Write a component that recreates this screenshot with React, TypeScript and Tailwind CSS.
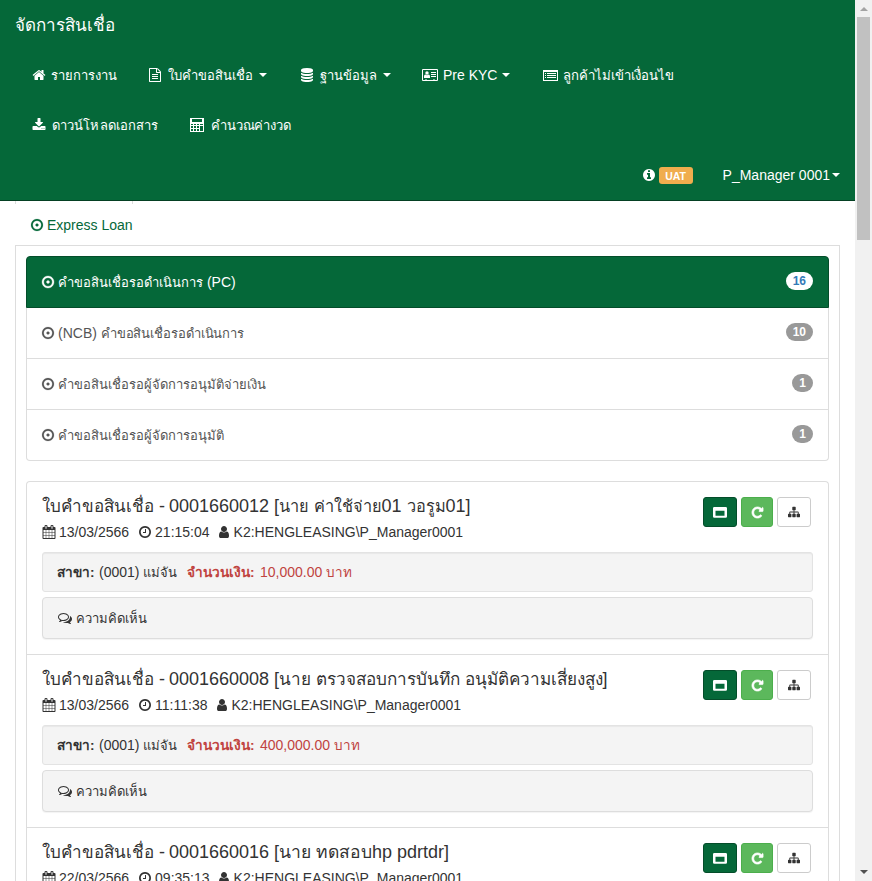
import type { ReactNode } from "react";

const CIRCLE =
  "q0 209-103 385.5t-279.5 279.5-385.5 103-385.5-103-279.5-279.5-103-385.5 103-385.5 279.5-279.5 385.5-103 385.5 103 279.5 279.5 103 385.5z";

const PATHS = {
  home: "M1472 992v480q0 26-19 45t-45 19h-384v-384h-256v384h-384q-26 0-45-19t-19-45v-480q0-1 .5-3t.5-3l575-474 575 474q1 2 1 6zm223-69l-62 74q-8 9-21 11h-3q-13 0-21-7l-692-577-692 577q-12 8-24 7-13-2-21-11l-62-74q-8-10-7-23.5t11-21.5l719-599q32-26 76-26t76 26l244 204v-195q0-14 9-23t23-9h192q14 0 23 9t9 23v408l219 182q10 8 11 21.5t-7 23.5z",
  file: "M1596 380q28 28 48 76t20 88v1152q0 40-28 68t-68 28h-1344q-40 0-68-28t-28-68v-1600q0-40 28-68t68-28h896q40 0 88 20t76 48zm-444-244v376h376q-10-29-22-41l-313-313q-12-12-41-22zm384 1528v-1024h-416q-40 0-68-28t-28-68v-416h-768v1536h1280zm-1024-864q0-14 9-23t23-9h704q14 0 23 9t9 23v64q0 14-9 23t-23 9h-704q-14 0-23-9t-9-23v-64zm736 224q14 0 23 9t9 23v64q0 14-9 23t-23 9h-704q-14 0-23-9t-9-23v-64q0-14 9-23t23-9h704zm0 256q14 0 23 9t9 23v64q0 14-9 23t-23 9h-704q-14 0-23-9t-9-23v-64q0-14 9-23t23-9h704z",
  database: "M896 768q237 0 443-43t325-127v170q0 69-103 128t-280 93.5-385 34.5-385-34.5-280-93.5-103-128v-170q119 84 325 127t443 43zm0 768q237 0 443-43t325-127v170q0 69-103 128t-280 93.5-385 34.5-385-34.5-280-93.5-103-128v-170q119 84 325 127t443 43zm0-384q237 0 443-43t325-127v170q0 69-103 128t-280 93.5-385 34.5-385-34.5-280-93.5-103-128v-170q119 84 325 127t443 43zm0-1152q208 0 385 34.5t280 93.5 103 128v128q0 69-103 128t-280 93.5-385 34.5-385-34.5-280-93.5-103-128v-128q0-69 103-128t280-93.5 385-34.5z",
  download: "M1344 1344q0-26-19-45t-45-19-45 19-19 45 19 45 45 19 45-19 19-45zm256 0q0-26-19-45t-45-19-45 19-19 45 19 45 45 19 45-19 19-45zm128-224v320q0 40-28 68t-68 28h-1472q-40 0-68-28t-28-68v-320q0-40 28-68t68-28h465l135 136q58 56 136 56t136-56l136-136h464q40 0 68 28t28 68zm-325-569q17 41-14 70l-448 448q-18 19-45 19t-45-19l-448-448q-31-29-14-70 17-39 59-39h256v-448q0-26 19-45t45-19h256q26 0 45 19t19 45v448h256q42 0 59 39z",
  dot: "M1088 896q0 80-56 136t-136 56-136-56-56-136 56-136 136-56 136 56 56 136zm-192-544q-148 0-273 73t-198 198-73 273 73 273 198 198 273 73 273-73 198-198 73-273-73-273-198-198-273-73zm768 544" + CIRCLE,
  clock: "M1024 544v448q0 14-9 23t-23 9h-320q-14 0-23-9t-9-23v-64q0-14 9-23t23-9h224v-352q0-14 9-23t23-9h64q14 0 23 9t9 23zm416 352q0-148-73-273t-198-198-273-73-273 73-198 198-73 273 73 273 198 198 273 73 273-73 198-198 73-273zm224 0" + CIRCLE,
  info: "M1152 1376v-160q0-14-9-23t-23-9h-96v-512q0-14-9-23t-23-9h-320q-14 0-23 9t-9 23v160q0 14 9 23t23 9h96v320h-96q-14 0-23 9t-9 23v160q0 14 9 23t23 9h448q14 0 23-9t9-23zm-128-896v-160q0-14-9-23t-23-9h-192q-14 0-23 9t-9 23v160q0 14 9 23t23 9h192q14 0 23-9t9-23zm640 416" + CIRCLE,
  calendar: "M192 1664h288v-288h-288v288zm352 0h320v-288h-320v288zm-352-352h288v-320h-288v320zm352 0h320v-320h-320v320zm-352-384h288v-288h-288v288zm736 736h320v-288h-320v288zm-384-736h320v-288h-320v288zm768 736h288v-288h-288v288zm-384-352h320v-320h-320v320zm-352-864v-288q0-13-9.5-22.5t-22.5-9.5h-64q-13 0-22.5 9.5t-9.5 22.5v288q0 13 9.5 22.5t22.5 9.5h64q13 0 22.5-9.5t9.5-22.5zm736 864h288v-320h-288v320zm-384-384h320v-288h-320v288zm384 0h288v-288h-288v288zm32-480v-288q0-13-9.5-22.5t-22.5-9.5h-64q-13 0-22.5 9.5t-9.5 22.5v288q0 13 9.5 22.5t22.5 9.5h64q13 0 22.5-9.5t9.5-22.5zm384-64v1280q0 52-38 90t-90 38h-1408q-52 0-90-38t-38-90v-1280q0-52 38-90t90-38h128v-96q0-66 47-113t113-47h64q66 0 113 47t47 113v96h384v-96q0-66 47-113t113-47h64q66 0 113 47t47 113v96h128q52 0 90 38t38 90z",
  user: "M1536 1399q0 109-62.5 187t-150.5 78h-854q-88 0-150.5-78t-62.5-187q0-85 8.5-160.5t31.5-152 58.5-131 94-89 134.5-34.5q131 128 313 128t313-128q76 0 134.5 34.5t94 89 58.5 131 31.5 152 8.5 160.5zm-256-887q0 159-112.5 271.5t-271.5 112.5-271.5-112.5-112.5-271.5 112.5-271.5 271.5-112.5 271.5 112.5 112.5 271.5z",
  comments: "M704 384q-153 0-286 52t-211.5 141-78.5 191q0 82 53 158t149 132l97 56-35 84q34-20 62-39l44-31 53 10q78 14 153 14 153 0 286-52t211.5-141 78.5-191-78.5-191-211.5-141-286-52zm0-128q191 0 353.5 68.5t256.5 186.5 94 257-94 257-256.5 186.5-353.5 68.5q-86 0-176-16-124 88-278 128-36 9-86 16h-3q-11 0-20.5-8t-11.5-21q-1-3-1-6.5t.5-6.5 2-6l2.5-5 3.5-5.5 4-5 4.5-5 4-4.5q5-6 23-25t26-29.5 22.5-29 25-38.5 20.5-44q-124-72-195-177t-71-224q0-139 94-257t256.5-186.5 353.5-68.5zm822 1169q10 24 20.5 44t25 38.5 22.5 29 26 29.5 23 25q1 1 4 4.5t4.5 5 4 5 3.5 5.5l2.5 5 2 6 .5 6.5-1 6.5q-3 14-13 22t-22 7q-50-7-86-16-154-40-278-128-90 16-176 16-271 0-472-132 58 4 88 4 161 0 309-45t264-129q125-92 192-212t67-254q0-77-23-152 129 71 204 178t75 230q0 120-71 224.5t-195 176.5z",
  repeat: "M1664 256v448q0 26-19 45t-45 19h-448q-42 0-59-40-17-39 14-69l138-138q-148-137-349-137-104 0-198.5 40.5t-163.5 109.5-109.5 163.5-40.5 198.5 40.5 198.5 109.5 163.5 163.5 109.5 198.5 40.5q119 0 225-52t179-147q7-10 23-12 15 0 25 9l137 138q9 8 9.5 20.5t-7.5 22.5q-109 132-264 204.5t-327 72.5q-156 0-298-61t-245-164-164-245-61-298 61-298 164-245 245-164 298-61q147 0 284.5 55.5t244.5 156.5l130-129q29-31 70-14 39 17 39 59z",
  sitemap: "M1792 1248v320q0 40-28 68t-68 28h-320q-40 0-68-28t-28-68v-320q0-40 28-68t68-28h96v-192h-512v192h96q40 0 68 28t28 68v320q0 40-28 68t-68 28h-320q-40 0-68-28t-28-68v-320q0-40 28-68t68-28h96v-192h-512v192h96q40 0 68 28t28 68v320q0 40-28 68t-68 28h-320q-40 0-68-28t-28-68v-320q0-40 28-68t68-28h96v-192q0-52 38-90t90-38h512v-192h-96q-40 0-68-28t-28-68v-320q0-40 28-68t68-28h320q40 0 68 28t28 68v320q0 40-28 68t-68 28h-96v192h512q52 0 90 38t38 90v192h96q40 0 68 28t28 68z",
};

/* Solid glyph on a 1792-unit grid, 14px square by default. */
function Icon({ name, className = "size-3.5" }: { name: keyof typeof PATHS; className?: string }) {
  return (
    <svg viewBox="0 0 1792 1792" className={`shrink-0 overflow-visible fill-current ${className}`}>
      <path d={PATHS[name]} />
    </svg>
  );
}

function CardIcon() {
  return (
    <svg viewBox="0 0 16 12" className="h-3 w-4 shrink-0 fill-current">
      <path fillRule="evenodd" d="M1 0h14a1 1 0 0 1 1 1v10a1 1 0 0 1-1 1H1a1 1 0 0 1-1-1V1a1 1 0 0 1 1-1zM1 1V11h2v-.6h2v.6h6v-.6h2v.6h2V1z" />
      <circle cx="5" cy="4" r="1.7" />
      <path d="M2 9V7.500q0-1.900 1.400-1.900 1.600 1.200 3.200 0Q8 5.600 8 7.500V9zM9 3h5v1H9zM9 5h5v1H9zM9 7h5v1H9z" />
    </svg>
  );
}

function ListIcon() {
  return (
    <svg viewBox="0 0 15 11" shapeRendering="crispEdges" className="h-[11px] w-[15px] shrink-0 fill-current">
      <path fillRule="evenodd" d="M0 0h15v11H0zM1 2V10h13V2z" />
      <path d="M2 3h1v1H2zM4 3h9v1H4zM2 5h1v1H2zM4 5h9v1H4zM2 7h1v1H2zM4 7h9v1H4z" />
    </svg>
  );
}

function CalculatorIcon() {
  return (
    <svg viewBox="0 0 14 14" shapeRendering="crispEdges" className="size-3.5 shrink-0 fill-current">
      <path fillRule="evenodd" d="M0 0h14v14H0zM2 1v3h10V1zM1 6v1h2V6zM4 6v1h2V6zM7 6v1h2V6zM10 6v1h3V6zM1 8v2h2V8zM4 8v2h2V8zM7 8v2h2V8zM10 8v5h3V8zM1 11v2h2V11zM4 11v2h2V11zM7 11v2h2V11z" />
    </svg>
  );
}

function WindowIcon() {
  return (
    <svg viewBox="0 0 14 11" className="h-[11px] w-3.5 fill-current">
      <path fillRule="evenodd" d="M1.300 0h11.400A1.300 1.300 0 0 1 14 1.300v8.200a1.300 1.300 0 0 1-1.300 1.300H1.300A1.300 1.300 0 0 1 0 9.500V1.300A1.300 1.300 0 0 1 1.300 0zM2.500 3.700v5h9V3.700z" />
    </svg>
  );
}

function Caret() {
  return <span className="h-0 w-0 border-x-4 border-t-4 border-x-transparent border-t-current" />;
}

/* Thai runs are set slightly smaller than the Latin text beside them. */
function Th({ children, className = "text-[13px]" }: { children: ReactNode; className?: string }) {
  return <span className={className}>{children}</span>;
}

function NavItem({ icon, box, label, caret }: { icon: ReactNode; box: string; label: ReactNode; caret?: boolean }) {
  return (
    <a className={`flex h-[50px] shrink-0 items-center whitespace-nowrap ${box}`}>
      {icon}
      <span>{label}</span>
      {caret && <Caret />}
    </a>
  );
}

const QUEUES = [
  { label: <span>(NCB) <Th className="text-[13px] tracking-[-0.1px]">คำขอสินเชื่อรอดำเนินการ</Th></span>, count: 10 },
  { label: <Th>คำขอสินเชื่อรอผู้จัดการอนุมัติจ่ายเงิน</Th>, count: 1 },
  { label: <Th>คำขอสินเชื่อรอผู้จัดการอนุมัติ</Th>, count: 1 },
];

const LOANS = [
  {
    id: "0001660012",
    who: <span>[<Th className="text-[16.300px]">นาย ค่าใช้จ่าย</Th>01 <Th className="text-[16.300px]">วอรูม</Th>01]</span>,
    date: "13/03/2566",
    time: "21:15:04",
    amount: "10,000.00",
  },
  {
    id: "0001660008",
    who: <span>[<Th className="text-[17.100px]">นาย ตรวจสอบการบันทึก อนุมัติความเสี่ยงสูง</Th>]</span>,
    date: "13/03/2566",
    time: "11:11:38",
    amount: "400,000.00",
  },
  {
    id: "0001660016",
    who: <span>[<Th className="text-[17.500px]">นาย ทดสอบ</Th>hp pdrtdr]</span>,
    date: "22/03/2566",
    time: "09:35:13",
    amount: "10,000.00",
  },
];

function Loan({ loan }: { loan: (typeof LOANS)[number] }) {
  return (
    <article className="h-[173px] border-b border-[#ddd] px-[15px] pt-[15px]">
      <div className="flex h-[55px] justify-between">
        <div className="-mt-px whitespace-nowrap">
          <h4 className="flex h-5 items-baseline text-[18px] leading-5">
            <span className="w-[127px]"><Th className="text-[17px]">ใบคำขอสินเชื่อ</Th> -</span>
            <span className="w-[105px]">{loan.id}</span>
            {loan.who}
          </h4>
          <div className="mt-1.5 flex h-5 items-center">
            <Icon name="calendar" className="mr-[3px] h-3.5 w-3.5" />
            <span>{loan.date}</span>
            <Icon name="clock" className="mr-[3px] ml-[9px] size-3.5" />
            <span>{loan.time}</span>
            <Icon name="user" className="mr-[3px] ml-[7px] size-3.5" />
            <span>K2:HENGLEASING\P_Manager0001</span>
          </div>
        </div>
        <div className="mr-[2px] flex h-[30px] gap-1">
          <button className="flex w-[34px] items-center justify-center rounded-[3px] border border-[#044d2a] bg-[#056839] text-white"><WindowIcon /></button>
          <button className="flex w-8 items-center justify-center rounded-[3px] border border-[#4cae4c] bg-[#5cb85c] text-white"><Icon name="repeat" className="size-[13px] stroke-current stroke-[90]" /></button>
          <button className="flex w-[34px] items-center justify-center rounded-[3px] border border-[#ccc] bg-white text-[#333]"><Icon name="sitemap" className="size-3" /></button>
        </div>
      </div>
      <div className="flex h-10 items-center whitespace-nowrap rounded-[3px] border border-[#e3e3e3] bg-[#f4f4f4] px-3.5 shadow-[inset_0_1px_1px_rgba(0,0,0,0.05)]">
        <b className="w-[42px] pt-px text-[13.700px]">สาขา:</b>
        <span className="w-[88px]">(0001) <Th>แม่จัน</Th></span>
        <span className="flex text-[#c0433f]">
          <b className="w-[73px] pt-px text-[13.700px]">จำนวนเงิน:</b>
          <span>{loan.amount} <Th className="text-[13.500px]">บาท</Th></span>
        </span>
      </div>
      <div className="mt-[5px] flex h-[42px] items-center gap-1 rounded-[4px] border border-[#ddd] bg-[#f4f4f4] px-[15px] shadow-[0_1px_1px_rgba(0,0,0,0.05)]">
        <Icon name="comments" />
        <Th className="pt-px text-[13px]">ความคิดเห็น</Th>
      </div>
    </article>
  );
}

export default function App() {
  return (
    <div className="flex h-[881px] w-[872px] overflow-hidden bg-white font-['Liberation_Sans',Arial,sans-serif] text-[14px] leading-5 text-[#333]">
      <div className="flex w-[855px] flex-col">
        <nav className="h-[201px] shrink-0 border-b border-[#044023] bg-[#056839] text-white">
          <div className="flex h-[50px] items-center px-[15px] pt-0.5 text-[17px]">จัดการสินเชื่อ</div>
          <div className="flex pl-8">
            <NavItem box="w-[116px] gap-[5px]" icon={<Icon name="home" />} label={<Th>รายการงาน</Th>} />
            <NavItem box="w-[152px] gap-1.5" icon={<Icon name="file" className="size-3.5" />} label={<Th>ใบคำขอสินเชื่อ</Th>} caret />
            <NavItem box="w-[122px] gap-1.5" icon={<Icon name="database" />} label={<Th>ฐานข้อมูล</Th>} caret />
            <NavItem box="w-[121px] gap-[5px]" icon={<CardIcon />} label="Pre KYC" caret />
            <NavItem box="gap-[5px]" icon={<ListIcon />} label={<Th className="text-[13.150px]">ลูกค้าไม่เข้าเงื่อนไข</Th>} />
          </div>
          <div className="flex pl-8">
            <NavItem box="w-[158px] gap-[6px]" icon={<Icon name="download" />} label={<Th className="text-[13px] tracking-[0.1px]">ดาวน์โหลดเอกสาร</Th>} />
            <NavItem box="gap-[7px]" icon={<CalculatorIcon />} label={<Th className="text-[13px] tracking-[-0.15px]">คำนวณค่างวด</Th>} />
          </div>
          <div className="flex h-[50px] items-center justify-end pr-[15px]">
            <Icon name="info" />
            <span className="mt-px mr-[30px] ml-[3px] flex h-[17px] w-[34px] items-center justify-center rounded-[3px] bg-[#f0ad4e] text-[10.500px] font-bold">UAT</span>
            <span className="mr-[2px]">P_Manager 0001</span>
            <Caret />
          </div>
        </nav>
        <main className="flex grow flex-col px-[15px]">
          <div className="h-11 w-[118px]">
            <div className="h-[3px] border-x border-[#ddd]" />
            <div className="flex h-[41px] items-center gap-[3px] pl-[15px] text-[#056839]">
              <Icon name="dot" className="size-3.5 stroke-current stroke-[20]" />
              <span className="whitespace-nowrap">Express Loan</span>
            </div>
          </div>
          <div className="grow border border-b-0 border-[#ddd] px-2.5 pt-2.5">
            <div className="mb-5">
              <div className="flex h-[52px] items-center rounded-t-[4px] border border-[#044d2a] bg-[#056839] pr-[15px] pl-3.5 text-white">
                <Icon name="dot" className="size-3.5 stroke-current stroke-[40]" />
                <span className="ml-[3px] grow"><Th>คำขอสินเชื่อรอดำเนินการ</Th> (PC)</span>
                <span className="-mt-0.5 rounded-[10px] bg-white px-[7px] py-[3px] text-[12px] leading-3 font-bold text-[#337ab7]">16</span>
              </div>
              {QUEUES.map((q, i) => (
                <div key={i} className="flex h-[51px] items-center border-x border-b border-[#ddd] pr-[15px] pl-3.5 text-[#555] last:rounded-b-[4px]">
                  <Icon name="dot" className="size-3.5 stroke-current stroke-[20]" />
                  <span className="ml-[3px] grow">{q.label}</span>
                  <span className="-mt-0.5 rounded-[10px] bg-[#999] px-[7px] py-[3px] text-[12px] leading-3 font-bold text-white">{q.count}</span>
                </div>
              ))}
            </div>
            <div className="h-[400px] overflow-hidden rounded-t-[4px] border border-b-0 border-[#ddd]">
              {LOANS.map((loan) => (
                <Loan key={loan.id} loan={loan} />
              ))}
            </div>
          </div>
        </main>
      </div>
      <div className="flex w-[17px] flex-col items-center justify-between bg-[#f1f1f1]">
        <div className="flex flex-col items-center">
          <span className="mt-[7px] mb-1.5 h-0 w-0 border-x-4 border-b-4 border-x-transparent border-b-[#a3a3a3]" />
          <span className="h-[223px] w-[13px] bg-[#c1c1c1]" />
        </div>
        <span className="mb-[7px] h-0 w-0 border-x-4 border-t-4 border-x-transparent border-t-[#505050]" />
      </div>
    </div>
  );
}
